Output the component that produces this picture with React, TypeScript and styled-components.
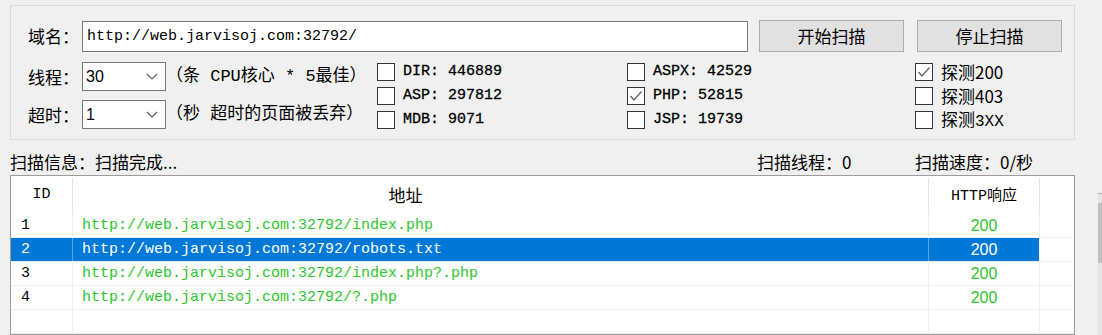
import styled, { createGlobalStyle } from "styled-components";

const GlobalStyle = createGlobalStyle`
  html, body {
    margin: 0;
    padding: 0;
    background: #f0f0f0;
  }
  body {
    font-family: "Noto Sans CJK SC", "Noto Sans", sans-serif;
    color: #000;
  }
`;

const MONO = `"Liberation Mono", "Noto Sans CJK SC", monospace`;
const GREEN = "#2dc52d";

type Result = { id: number; url: string; code: string };

const results: Result[] = [
  { id: 1, url: "http://web.jarvisoj.com:32792/index.php", code: "200" },
  { id: 2, url: "http://web.jarvisoj.com:32792/robots.txt", code: "200" },
  { id: 3, url: "http://web.jarvisoj.com:32792/index.php?.php", code: "200" },
  { id: 4, url: "http://web.jarvisoj.com:32792/?.php", code: "200" },
];

const selectedId = 2;

function Chevron() {
  return (
    <svg width="12" height="7" viewBox="0 0 12 7">
      <polyline points="1,1 6,6 11,1" fill="none" stroke="#606060" strokeWidth="1.2" />
    </svg>
  );
}

function CheckBox({ checked, label }: { checked?: boolean; label: React.ReactNode }) {
  return (
    <S.CheckItem>
      <S.Box>
        {checked && (
          <svg width="16" height="16" viewBox="0 0 16 16">
            <polyline points="2.5,8 6,12 13.5,3.5" fill="none" stroke="#6a6a6a" strokeWidth="1.4" />
          </svg>
        )}
      </S.Box>
      {label}
    </S.CheckItem>
  );
}

export default function App() {
  return (
    <>
      <GlobalStyle />
      <S.Page>
        <S.Main>
          <S.Group>
            <S.TopRow>
              <S.FieldLabel>域名：</S.FieldLabel>
              <S.UrlInput readOnly value="http://web.jarvisoj.com:32792/" />
              <S.Button $ml={11}>开始扫描</S.Button>
              <S.Button $ml={13}>停止扫描</S.Button>
            </S.TopRow>

            <S.OptionsRow>
              <S.Settings>
                <S.SettingRow>
                  <S.FieldLabel>线程：</S.FieldLabel>
                  <S.Combo>
                    <span>30</span>
                    <Chevron />
                  </S.Combo>
                  <S.Hint>（条 CPU核心 * 5最佳）</S.Hint>
                </S.SettingRow>
                <S.SettingRow>
                  <S.FieldLabel>超时：</S.FieldLabel>
                  <S.Combo>
                    <span>1</span>
                    <Chevron />
                  </S.Combo>
                  <S.Hint>（秒 超时的页面被丢弃）</S.Hint>
                </S.SettingRow>
              </S.Settings>

              <S.CheckColumn $width={250}>
                <CheckBox label={<S.MonoText>DIR: 446889</S.MonoText>} />
                <CheckBox label={<S.MonoText>ASP: 297812</S.MonoText>} />
                <CheckBox label={<S.MonoText>MDB: 9071</S.MonoText>} />
              </S.CheckColumn>
              <S.CheckColumn $width={288}>
                <CheckBox label={<S.MonoText>ASPX: 42529</S.MonoText>} />
                <CheckBox checked label={<S.MonoText>PHP: 52815</S.MonoText>} />
                <CheckBox label={<S.MonoText>JSP: 19739</S.MonoText>} />
              </S.CheckColumn>
              <S.CheckColumn $width={150}>
                <CheckBox checked label={<S.SansText>探测200</S.SansText>} />
                <CheckBox label={<S.SansText>探测403</S.SansText>} />
                <CheckBox
                  label={
                    <S.SansText>
                      探测<S.MonoInline>3XX</S.MonoInline>
                    </S.SansText>
                  }
                />
              </S.CheckColumn>
            </S.OptionsRow>
          </S.Group>

          <S.StatusBar>
            <S.StatusMain>扫描信息：扫描完成...</S.StatusMain>
            <S.StatusItem $width={158}>扫描线程：0</S.StatusItem>
            <S.StatusItem $width={160}>扫描速度：0/秒</S.StatusItem>
          </S.StatusBar>

          <S.ListView>
            <S.HeaderRow>
              <S.HeaderCell $width={62} $mono>ID</S.HeaderCell>
              <S.HeaderCell $width={856} $padRight={190}>地址</S.HeaderCell>
              <S.HeaderCell $width={111} $mono>HTTP响应</S.HeaderCell>
              <S.Filler />
            </S.HeaderRow>
            {results.map((r) => {
              const sel = r.id === selectedId;
              return (
                <S.Row key={r.id}>
                  <S.IdCell $selected={sel}>{r.id}</S.IdCell>
                  <S.UrlCell $selected={sel}>{r.url}</S.UrlCell>
                  <S.CodeCell $selected={sel}>{r.code}</S.CodeCell>
                  <S.Filler />
                </S.Row>
              );
            })}
            <S.Row>
              <S.IdCell />
              <S.UrlCell />
              <S.CodeCell />
              <S.Filler />
            </S.Row>
          </S.ListView>
        </S.Main>

        <S.Side>
          <S.ScrollEdge>
            <S.ScrollThumb />
          </S.ScrollEdge>
        </S.Side>
      </S.Page>
    </>
  );
}

const S = {
  Page: styled.div`
    display: flex;
    width: 1102px;
    height: 335px;
    overflow: hidden;
    background: #f0f0f0;
  `,

  Main: styled.div`
    display: flex;
    flex-direction: column;
    width: 1075px;
    padding: 5px 0 0 10px;
    box-sizing: border-box;
    flex-shrink: 0;
  `,

  Group: styled.div`
    height: 137px;
    box-sizing: border-box;
    border: 1px solid #dcdcdc;
    padding: 14px 0 0 17px;
  `,

  TopRow: styled.div`
    display: flex;
    align-items: center;
    height: 32px;
  `,

  FieldLabel: styled.div`
    width: 54px;
    flex-shrink: 0;
    font-size: 17px;
    line-height: 22px;
    white-space: nowrap;
  `,

  UrlInput: styled.input`
    width: 666px;
    height: 31px;
    box-sizing: border-box;
    border: 1px solid #7a7a7a;
    padding: 0 4px;
    margin: 0;
    background: #fff;
    font-family: ${MONO};
    font-size: 15px;
    color: #000;
    outline: none;
  `,

  Button: styled.div<{ $ml: number }>`
    width: 145px;
    height: 32px;
    margin-left: ${({ $ml }) => $ml}px;
    box-sizing: border-box;
    border: 1px solid #adadad;
    background: #e1e1e1;
    display: flex;
    align-items: center;
    justify-content: center;
    font-size: 17px;
    line-height: 22px;
  `,

  OptionsRow: styled.div`
    display: flex;
    margin-top: 8px;
  `,

  Settings: styled.div`
    width: 349px;
    display: flex;
    flex-direction: column;
    gap: 9px;
    padding-top: 2px;
    flex-shrink: 0;
  `,

  SettingRow: styled.div`
    display: flex;
    align-items: center;
    height: 29px;
  `,

  Combo: styled.div`
    width: 84px;
    height: 29px;
    box-sizing: border-box;
    border: 1px solid #7a7a7a;
    background: #fff;
    display: flex;
    align-items: center;
    justify-content: space-between;
    padding: 0 7px 0 3px;
    font-family: "Liberation Sans", sans-serif;
    font-size: 16px;
    flex-shrink: 0;
  `,

  Hint: styled.div`
    font-family: ${MONO};
    font-size: 17px;
    line-height: 22px;
    white-space: nowrap;
  `,

  CheckColumn: styled.div<{ $width: number }>`
    width: ${({ $width }) => $width}px;
    flex-shrink: 0;
    display: flex;
    flex-direction: column;
  `,

  CheckItem: styled.div`
    display: flex;
    align-items: center;
    gap: 8px;
    height: 24px;
  `,

  Box: styled.div`
    width: 18px;
    height: 18px;
    box-sizing: border-box;
    border: 1px solid #333;
    background: #fff;
    display: flex;
    align-items: center;
    justify-content: center;
    flex-shrink: 0;
  `,

  MonoText: styled.span`
    font-family: ${MONO};
    font-size: 15px;
    font-weight: 400;
    line-height: 20px;
    white-space: nowrap;
    -webkit-text-stroke: 0.3px #000;
  `,

  SansText: styled.span`
    font-size: 17px;
    line-height: 20px;
    white-space: nowrap;
  `,

  MonoInline: styled.span`
    font-family: ${MONO};
    font-size: 16px;
    line-height: 20px;
  `,

  StatusBar: styled.div`
    height: 35px;
    display: flex;
    align-items: flex-end;
    padding-bottom: 3px;
    box-sizing: border-box;
    font-size: 17px;
    line-height: 20px;
    white-space: nowrap;
  `,

  StatusMain: styled.div`
    flex: 1;
  `,

  StatusItem: styled.div<{ $width: number }>`
    width: ${({ $width }) => $width}px;
  `,

  ListView: styled.div`
    border: 1px solid #9c9c9c;
    background: #fff;
    display: flex;
    flex-direction: column;
  `,

  HeaderRow: styled.div`
    display: flex;
    height: 38px;
    padding-top: 2px;
    box-sizing: border-box;
  `,

  HeaderCell: styled.div<{ $width: number; $mono?: boolean; $padRight?: number }>`
    width: ${({ $width }) => $width}px;
    flex-shrink: 0;
    box-sizing: border-box;
    border-right: 1px solid #e5e5e5;
    display: flex;
    align-items: center;
    justify-content: center;
    padding-right: ${({ $padRight }) => $padRight ?? 0}px;
    padding-bottom: 4px;
    font-family: ${({ $mono }) => ($mono ? MONO : `"Noto Sans CJK SC", sans-serif`)};
    font-size: ${({ $mono }) => ($mono ? 15 : 17)}px;
    white-space: nowrap;
  `,

  Filler: styled.div`
    flex: 1;
    background: #fff;
  `,

  Row: styled.div`
    display: flex;
    height: 24px;
    box-sizing: border-box;
    border-bottom: 1px solid #f0f0f0;
  `,

  IdCell: styled.div<{ $selected?: boolean }>`
    width: 62px;
    flex-shrink: 0;
    box-sizing: border-box;
    padding-left: 10px;
    border-right: 1px solid ${({ $selected }) => ($selected ? "#5aa6e8" : "#f0f0f0")};
    background: ${({ $selected }) => ($selected ? "#0078d7" : "#fff")};
    color: ${({ $selected }) => ($selected ? "#fff" : "#000")};
    font-family: ${MONO};
    font-size: 15px;
    line-height: 24px;
  `,

  UrlCell: styled.div<{ $selected?: boolean }>`
    width: 856px;
    flex-shrink: 0;
    box-sizing: border-box;
    padding-left: 9px;
    border-right: 1px solid ${({ $selected }) => ($selected ? "#5aa6e8" : "#f0f0f0")};
    background: ${({ $selected }) => ($selected ? "#0078d7" : "#fff")};
    color: ${({ $selected }) => ($selected ? "#fff" : GREEN)};
    font-family: ${MONO};
    font-size: 15px;
    line-height: 24px;
    white-space: nowrap;
  `,

  CodeCell: styled.div<{ $selected?: boolean }>`
    width: 111px;
    flex-shrink: 0;
    box-sizing: border-box;
    border-right: 1px solid #f0f0f0;
    background: ${({ $selected }) => ($selected ? "#0078d7" : "#fff")};
    color: ${({ $selected }) => ($selected ? "#fff" : GREEN)};
    text-align: center;
    font-family: "Liberation Sans", sans-serif;
    font-size: 16px;
    line-height: 24px;
  `,

  Side: styled.div`
    flex: 1;
    display: flex;
    justify-content: flex-end;
  `,

  ScrollEdge: styled.div`
    width: 4px;
    margin-top: 193px;
    border-top: 1px solid #b4b4b4;
    background: #e4e4e4;
    padding-top: 9px;
  `,

  ScrollThumb: styled.div`
    height: 60px;
    background: #c2c2c2;
  `,
};
